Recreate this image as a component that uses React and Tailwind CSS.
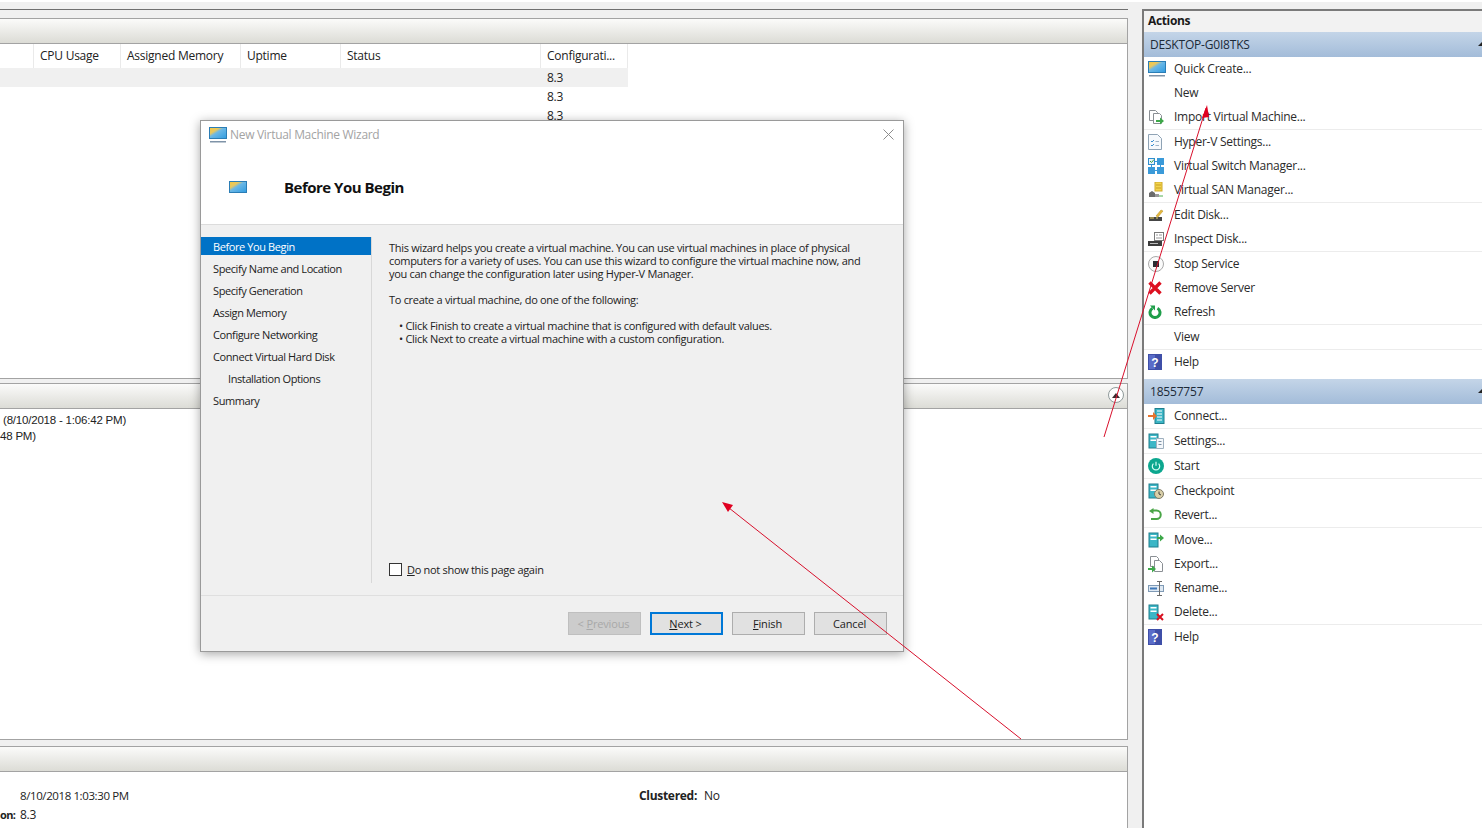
import React from "react";

const Mon = () => (
  <svg width="18" height="16" viewBox="0 0 18 16">
    <defs>
      <linearGradient id="sky" x1="0" y1="0" x2="1" y2="1">
        <stop offset="0" stopColor="#f5c842" />
        <stop offset="0.3" stopColor="#e8c860" />
        <stop offset="0.45" stopColor="#6cb8e6" />
        <stop offset="1" stopColor="#2f9be0" />
      </linearGradient>
    </defs>
    <rect x="0.5" y="0.5" width="17" height="11" fill="url(#sky)" stroke="#2b7db5" />
    <rect x="1" y="14" width="16" height="1.5" fill="#7f93a8" />
  </svg>
);

const Vm = () => (
  <>
    <rect x="1" y="1" width="9" height="14" fill="#3cb6c6" stroke="#1f7f8e" />
    <rect x="2.5" y="3" width="6" height="1.5" fill="#fff" />
    <rect x="2.5" y="6.5" width="6" height="1.5" fill="#fff" />
  </>
);

const HelpIcon = () => (
  <svg width="14" height="16" viewBox="0 0 14 16">
    <rect width="14" height="16" fill="#3f4fa8" />
    <rect x="1" y="1" width="6" height="14" fill="#5a6cc8" />
    <text x="7" y="13" fontSize="12" fontWeight="700" textAnchor="middle" fill="#fff" fontFamily="Liberation Sans, sans-serif">?</text>
  </svg>
);

const icons = {
  quick: <Mon />,
  import: (
    <svg width="18" height="16" viewBox="0 0 18 16">
      <path d="M1.5 1.5h6l2 2v8h-8z" fill="#fff" stroke="#8a8f94" />
      <path d="M5.5 4.5h6l2 2v8h-8z" fill="#fff" stroke="#8a8f94" />
      <path d="M8 11h4V8.500l4 3.500-4 3.500V13H8z" fill="#3ea84a" />
    </svg>
  ),
  settings: (
    <svg width="14" height="16" viewBox="0 0 14 16">
      <path d="M.5.500h9l4 4v11H.5z" fill="#f6f9fc" stroke="#8fa3b5" />
      <path d="M3 7l1 1 2-2M3 11l1 1 2-2" stroke="#3c8fcf" fill="none" />
      <path d="M7.500 7.500H11M7.500 11.500H11" stroke="#9fb4c6" />
    </svg>
  ),
  vswitch: (
    <svg width="16" height="16" viewBox="0 0 16 16">
      <rect x=".5" y=".5" width="6" height="6" fill="#e8f3fb" stroke="#2f8fd0" />
      <path d="M2 3l1.500 1.500L6 1.500" stroke="#3e9f3e" fill="none" />
      <rect x="9" y="0" width="7" height="7" fill="#3a9ad9" />
      <rect x="0" y="9" width="7" height="7" fill="#3a9ad9" />
      <rect x="9" y="9" width="7" height="7" fill="#3a9ad9" />
      <path d="M7 3.500h2M3.500 7v2M12.500 7v2M7 12.500h2" stroke="#3a9ad9" />
    </svg>
  ),
  san: (
    <svg width="16" height="16" viewBox="0 0 16 16">
      <rect x="7" y="0" width="7" height="9" fill="#f2d44f" stroke="#cfa92b" />
      <path d="M8 3h5M8 6h5" stroke="#c89f22" />
      <path d="M1 15v-4l3-2 3 2v4z" fill="#6b6b6b" />
      <path d="M7 15v-3h4v3z" fill="#999" />
      <path d="M11 14h4" stroke="#50b050" />
    </svg>
  ),
  edit: (
    <svg width="16" height="14" viewBox="0 0 16 14">
      <path d="M1 9h13v4H1z" fill="#454545" />
      <path d="M2 10h4M8 10h2" stroke="#e8d060" />
      <path d="M8 8l5-6 2 1-5 6z" fill="#e6b93c" stroke="#b48a1e" strokeWidth=".5" />
    </svg>
  ),
  inspect: (
    <svg width="16" height="15" viewBox="0 0 16 15">
      <rect x="6.500" y=".5" width="9" height="8" fill="#fff" stroke="#7a7a7a" />
      <path d="M8 3h2M11 3h3M8 6h6" stroke="#9a9a9a" />
      <rect x="0" y="9" width="14" height="5" fill="#3c3c3c" />
      <path d="M2 11.500h8" stroke="#bdbdbd" />
    </svg>
  ),
  stop: (
    <svg width="16" height="16" viewBox="0 0 16 16">
      <circle cx="8" cy="8" r="7.500" fill="#fbfbfb" stroke="#a8a8a8" />
      <rect x="5" y="5" width="6" height="6" fill="#2d2d33" />
    </svg>
  ),
  remove: (
    <svg width="14" height="14" viewBox="0 0 14 14">
      <path d="M1.500 1.500l11 11M12.500 1.500l-11 11" stroke="#dd1020" strokeWidth="3.400" />
    </svg>
  ),
  refresh: (
    <svg width="14" height="14" viewBox="0 0 14 14">
      <path d="M4.500 3.200a5 5 0 1 0 5 0" fill="none" stroke="#1f9e4a" strokeWidth="3" />
      <path d="M2 .5h5v5z" fill="#1f9e4a" />
    </svg>
  ),
  help: <HelpIcon />,
  connect: (
    <svg width="17" height="16" viewBox="0 0 17 16">
      <rect x="7" y=".5" width="9" height="15" fill="#3cb6c6" stroke="#1f7f8e" />
      <path d="M9 3h5M9 6h5M9 9h5M9 12h5" stroke="#fff" />
      <path d="M0 7h5V4l4 4-4 4V9H0z" fill="#e8742c" />
    </svg>
  ),
  vmsettings: (
    <svg width="16" height="16" viewBox="0 0 16 16">
      <Vm />
      <path d="M8.500 5.500h7v10h-7z" fill="#f4f7fa" stroke="#9fb0bf" />
      <path d="M10.500 8.500h3M10.500 11.500h3" stroke="#7b8fa3" />
    </svg>
  ),
  start: (
    <svg width="16" height="16" viewBox="0 0 16 16">
      <circle cx="8" cy="8" r="8" fill="#0ca78f" />
      <path d="M5.400 5.600a3.700 3.700 0 1 0 5.200 0" fill="none" stroke="#d8fff6" strokeWidth="1.200" />
      <path d="M8 3.800v4" stroke="#d8fff6" strokeWidth="1.200" />
    </svg>
  ),
  checkpoint: (
    <svg width="16" height="16" viewBox="0 0 16 16">
      <Vm />
      <circle cx="11" cy="11" r="4.500" fill="#d9cfa8" stroke="#7f7a66" />
      <path d="M11 8.500V11l2 1" stroke="#3e3e3e" fill="none" />
    </svg>
  ),
  revert: (
    <svg width="14" height="14" viewBox="0 0 14 14">
      <path d="M5 2.500h3.500a4 4 0 0 1 0 8.500H3" fill="none" stroke="#49a546" strokeWidth="2" />
      <path d="M1 3l4.500-3v6z" fill="#49a546" />
    </svg>
  ),
  move: (
    <svg width="16" height="16" viewBox="0 0 16 16">
      <Vm />
      <path d="M9 5h3V2.500L16 6l-4 3.500V7H9z" fill="#3ea84a" />
    </svg>
  ),
  export: (
    <svg width="15" height="17" viewBox="0 0 15 17">
      <path d="M2.500.5h6l2 2v8h-8z" fill="#fff" stroke="#8a8f94" />
      <path d="M6.500 4.500h5l3 3v8h-8z" fill="#fff" stroke="#8a8f94" />
      <path d="M0 12h4V9.500l4 3.500-4 3.500V14H0z" fill="#3ea84a" />
    </svg>
  ),
  rename: (
    <svg width="17" height="15" viewBox="0 0 17 15">
      <rect x=".5" y="4.500" width="15" height="6" fill="#dfe9f3" stroke="#7f9ab5" />
      <rect x="2" y="6.500" width="7" height="2" fill="#3f78b8" />
      <path d="M9 .5h5M11.500.5v14M9 14.500h5" stroke="#6a6a6a" fill="none" />
    </svg>
  ),
  del: (
    <svg width="17" height="17" viewBox="0 0 17 17">
      <Vm />
      <path d="M9 10l6 6M15 10l-6 6" stroke="#d81020" strokeWidth="2" />
    </svg>
  ),
};

// Each action row carries its own height class because the list is spaced unevenly.
const serverActions = [
  { t: "Quick Create...", i: "quick", h: "h-6" },
  { t: "New", h: "h-6" },
  { t: "Import Virtual Machine...", i: "import", h: "h-[25px]", line: true },
  { t: "Hyper-V Settings...", i: "settings", h: "h-6" },
  { t: "Virtual Switch Manager...", i: "vswitch", h: "h-6" },
  { t: "Virtual SAN Manager...", i: "san", h: "h-[25px]", line: true },
  { t: "Edit Disk...", i: "edit", h: "h-6" },
  { t: "Inspect Disk...", i: "inspect", h: "h-[25px]", line: true },
  { t: "Stop Service", i: "stop", h: "h-6" },
  { t: "Remove Server", i: "remove", h: "h-6" },
  { t: "Refresh", i: "refresh", h: "h-[25px]", line: true },
  { t: "View", h: "h-[25px]", line: true },
  { t: "Help", i: "help", h: "h-[29px]", top: true },
];

const vmActions = [
  { t: "Connect...", i: "connect", h: "h-[25px]", line: true },
  { t: "Settings...", i: "vmsettings", h: "h-[25px]", line: true },
  { t: "Start", i: "start", h: "h-[25px]", line: true },
  { t: "Checkpoint", i: "checkpoint", h: "h-6" },
  { t: "Revert...", i: "revert", h: "h-[25px]", line: true },
  { t: "Move...", i: "move", h: "h-6" },
  { t: "Export...", i: "export", h: "h-6" },
  { t: "Rename...", i: "rename", h: "h-6" },
  { t: "Delete...", i: "del", h: "h-[25px]", line: true },
  { t: "Help", i: "help", h: "h-6" },
];

const ActionRow = ({ t, i, h, line, top }) => (
  <div className={`flex ${top ? "items-start pt-1" : "items-center"} pl-1 ${h} ${line ? "border-b border-[#ececec]" : ""}`}>
    <span className="w-[26px] h-4 flex items-center shrink-0">{i ? icons[i] : null}</span>
    <span className="text-xs text-[#2b2b2b] tracking-[-0.26px] whitespace-nowrap">{t}</span>
  </div>
);

const ActionHeader = ({ children }) => (
  <div className="h-[25px] flex items-center justify-between pl-1.5 bg-gradient-to-b from-[#c4d5e8] to-[#a3bcd9] text-xs text-[#1c2a38] tracking-[-0.2px]">
    <span>{children}</span>
    <svg width="4" height="5" viewBox="0 0 4 5">
      <path d="M0 4L4 0v4z" fill="#222" />
    </svg>
  </div>
);

const PaneHeader = () => (
  <div className="h-[25px] shrink-0 bg-gradient-to-b from-[#fbfbfa] to-[#dcdcd6] border-b border-[#a3a3a3]" />
);

const columns = [
  { label: "", w: "w-[34px]" },
  { label: "CPU Usage", w: "w-[87px]" },
  { label: "Assigned Memory", w: "w-[120px]" },
  { label: "Uptime", w: "w-[100px]" },
  { label: "Status", w: "w-[200px]" },
  { label: "Configurati...", w: "w-[87px]" },
];

const wizardSteps = [
  "Before You Begin",
  "Specify Name and Location",
  "Specify Generation",
  "Assign Memory",
  "Configure Networking",
  "Connect Virtual Hard Disk",
  "Installation Options",
  "Summary",
];

const WizButton = ({ children, variant }) => {
  const look =
    variant === "off"
      ? "bg-[#cccccc] border-[#bfbfbf] text-[#a8a8a8]"
      : variant === "main"
        ? "bg-[#e1e1e1] border-2 border-[#0078d7] text-[#1c1c1c]"
        : "bg-[#e1e1e1] border-[#adadad] text-[#1c1c1c]";
  return (
    <div className={`w-[73px] h-[23px] border pt-[2px] flex items-center justify-center text-[11px] tracking-[-0.15px] ${look}`}>
      <span className="-ml-[2px]">{children}</span>
    </div>
  );
};

const Wizard = () => (
  <div className="absolute left-[200px] top-[120px] w-[704px] h-[532px] bg-white border border-[#9a9a9a] shadow-[0_2px_10px_rgba(0,0,0,0.35)] flex flex-col">
    <div className="h-[104px] shrink-0 border-b border-[#dcdcdc] relative flex flex-col">
      <div className="flex items-center h-[27px] pl-2">
        <span className="w-[21px] flex"><Mon /></span>
        <span className="text-xs text-[#a3a3a3] tracking-[-0.3px]">New Virtual Machine Wizard</span>
        <svg className="ml-auto mr-[9px]" width="11" height="11" viewBox="0 0 11 11">
          <path d="M.5.500l10 10M10.500.500l-10 10" stroke="#8c8c8c" />
        </svg>
      </div>
      <div className="flex items-center pl-7 mt-[30px] h-[18px]">
        <span className="w-[55px] flex">
          <svg width="18" height="12" viewBox="0 0 18 12">
            <rect x="0.5" y="0.5" width="17" height="11" fill="url(#sky)" stroke="#2b7db5" />
          </svg>
        </span>
        <span className="text-[15px] font-bold text-[#111] tracking-[-0.5px]">Before You Begin</span>
      </div>
    </div>

    <div className="flex-1 bg-[#f0f0f0] flex min-h-0">
      <div className="w-[171px] mt-3 mb-3 border-r border-[#d8d8d8] shrink-0">
        {wizardSteps.map((s, n) => (
          <div
            key={s}
            className={`h-[18px] mb-1 pt-[2px] flex items-center text-[11px] tracking-[-0.4px] ${n === 0 ? "bg-[#0072c6] text-white" : "text-[#222]"} ${n === 6 ? "pl-[27px]" : "pl-3"}`}
          >
            {s}
          </div>
        ))}
      </div>
      <div className="flex-1 pl-[17px] pt-4 pb-[19px] flex flex-col text-[11px] leading-[13px] text-[#222] tracking-[-0.3px]">
        <p>This wizard helps you create a virtual machine. You can use virtual machines in place of physical</p>
        <p>computers for a variety of uses. You can use this wizard to configure the virtual machine now, and</p>
        <p>you can change the configuration later using Hyper-V Manager.</p>
        <p className="mt-[13px]">To create a virtual machine, do one of the following:</p>
        <p className="mt-[13px] pl-[10px]">• Click Finish to create a virtual machine that is configured with default values.</p>
        <p className="pl-[10px]">• Click Next to create a virtual machine with a custom configuration.</p>
        <div className="mt-auto flex items-center">
          <span className="w-[13px] h-[13px] border border-[#333] bg-white shrink-0" />
          <span className="ml-[5px]"><u>D</u>o not show this page again</span>
        </div>
      </div>
    </div>

    <div className="h-[56px] shrink-0 bg-[#f0f0f0] border-t border-[#dfdfdf] flex justify-end gap-[9px] pr-4 pt-4">
      <WizButton variant="off">&lt;&nbsp;<u>P</u>revious</WizButton>
      <WizButton variant="main"><u>N</u>ext&nbsp;&gt;</WizButton>
      <WizButton><u>F</u>inish</WizButton>
      <WizButton>Cancel</WizButton>
    </div>
  </div>
);

// Hand-drawn annotation arrows on top of the console.
const Annotations = () => (
  <svg className="absolute inset-0 pointer-events-none" width="1482" height="828" viewBox="0 0 1482 828">
    <path d="M1104 437L1206 108" stroke="#d8102c" strokeWidth="1" fill="none" />
    <path d="M1207 105l-5 13 7-1z" fill="#e00020" />
    <path d="M1021 739L724 504" stroke="#d8102c" strokeWidth="1" fill="none" />
    <path d="M722 502l11 3-5 7z" fill="#e00020" />
  </svg>
);

export default function App() {
  return (
    <div className="relative w-[1482px] h-[828px] overflow-hidden bg-[#f0f0f0] font-['Open_Sans',sans-serif] text-[#222]">
      <div className="h-[2px] bg-white" />
      <div className="flex h-[826px]">
        <div className="w-[1128px] shrink-0 flex flex-col">
          <div className="h-[7px] shrink-0" />
          <div className="h-[9px] shrink-0 border-t border-[#707070]" />
          <div className="h-[361px] shrink-0 flex flex-col bg-white border-t border-r border-b border-[#a3a3a3]">
            <PaneHeader />
            <div className="flex h-6 shrink-0 items-center text-xs tracking-[-0.25px]">
              {columns.map((c) => (
                <div key={c.w + c.label} className={`${c.w} h-full flex items-center pl-[6px] border-r border-[#eaeaea] whitespace-nowrap`}>
                  {c.label}
                </div>
              ))}
            </div>
            <div className="w-[628px] text-xs leading-[19px] tracking-[-0.25px]">
              <div className="h-[19px] bg-[#f0f0f0] pl-[547px]">8.3</div>
              <div className="h-[19px] pl-[547px]">8.3</div>
              <div className="h-[19px] pl-[547px]">8.3</div>
            </div>
          </div>
          <div className="h-[4px] shrink-0" />
          <div className="h-[357px] shrink-0 flex flex-col bg-white border-t border-r border-b border-[#a3a3a3]">
            <div className="relative shrink-0">
              <PaneHeader />
              <div className="absolute right-[3px] top-[3px] w-4 h-4 rounded-full border border-[#8f9a9a] bg-white flex items-center justify-center">
                <svg width="8" height="5" viewBox="0 0 8 5"><path d="M4 0l4 5H0z" fill="#3b2b30" /></svg>
              </div>
            </div>
            <div className="pt-[3px] text-[11.5px] leading-4 tracking-[-0.2px] font-['Liberation_Sans',sans-serif]">
              <div className="pl-[3px]">(8/10/2018 - 1:06:42 PM)</div>
              <div>48 PM)</div>
            </div>
          </div>
          <div className="h-[6px] shrink-0" />
          <div className="flex-1 flex flex-col bg-white border-t border-r border-[#a3a3a3] min-h-0">
            <PaneHeader />
            <div className="flex pt-[14px] text-xs leading-[19px] tracking-[-0.3px]">
              <div className="pl-5 w-[639px] shrink-0">
                <div className="text-[11.5px] tracking-[-0.4px]">8/10/2018 1:03:30 PM</div>
                <div className="-ml-5 flex">
                  <b className="w-[15px] mr-[5px] text-[11px] tracking-[-0.6px] whitespace-nowrap">on:</b>
                  <span>8.3</span>
                </div>
              </div>
              <div className="whitespace-nowrap"><b>Clustered:</b><span className="ml-[7px]">No</span></div>
            </div>
          </div>
        </div>

        <div className="w-[14px] shrink-0" />

        <div className="flex-1 flex flex-col mt-[7px] bg-white border-t-2 border-l-2 border-[#7a7a7a]">
          <div className="h-[21px] shrink-0 pb-[2px] bg-[#f2f2f2] flex items-center pl-[4px] text-xs font-bold tracking-[-0.35px] text-[#1a1a1a]">
            Actions
          </div>
          <ActionHeader>DESKTOP-G0I8TKS</ActionHeader>
          {serverActions.map((a) => <ActionRow key={a.t} {...a} />)}
          <ActionHeader>18557757</ActionHeader>
          {vmActions.map((a) => <ActionRow key={a.t} {...a} />)}
        </div>
      </div>

      <Wizard />
      <Annotations />
    </div>
  );
}
